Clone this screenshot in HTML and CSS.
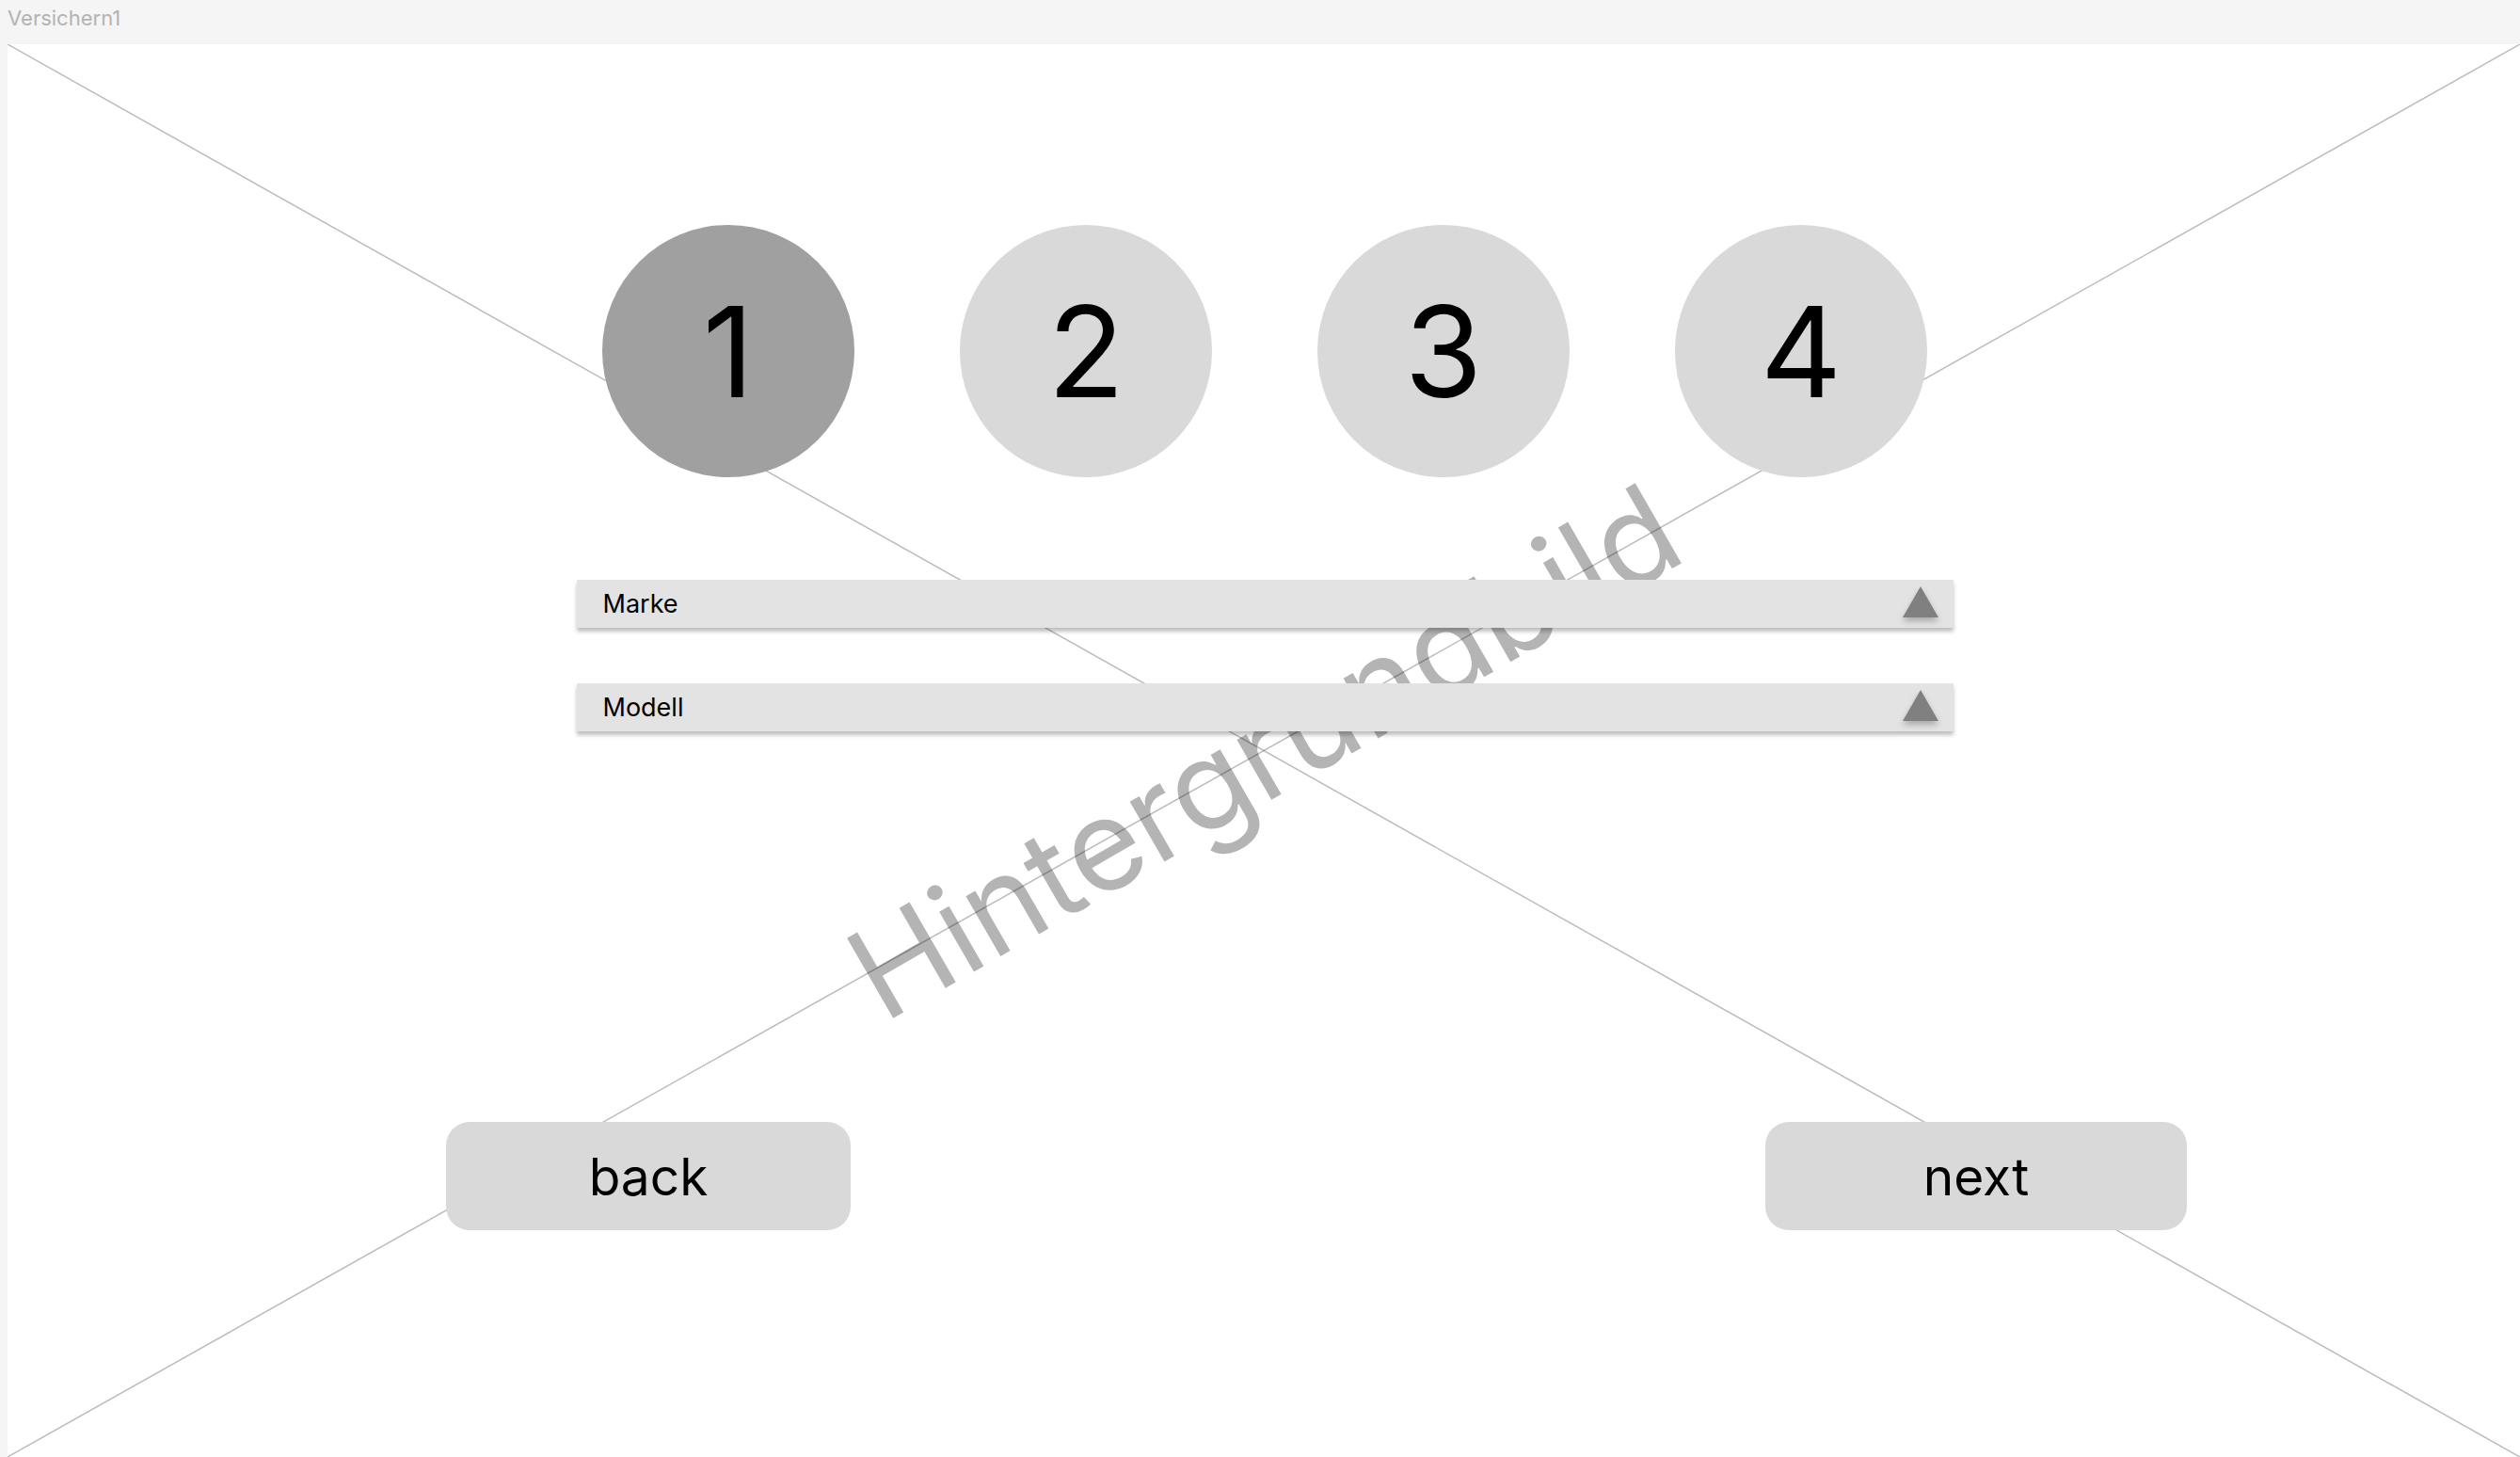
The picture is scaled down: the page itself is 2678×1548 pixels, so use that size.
FILE: index.html
```html
<!DOCTYPE html>
<html lang="de">
<head>
<meta charset="utf-8">
<title>Versichern1</title>
<link rel="stylesheet" href="styles.css">
</head>
<body>
<div class="canvas-title">Versichern1</div>
<div class="frame">
  <div class="watermark">Hintergrundbild</div>
  <svg class="cross" viewBox="0 0 100 100" preserveAspectRatio="none" aria-hidden="true">
    <line x1="0" y1="0" x2="100" y2="100" vector-effect="non-scaling-stroke"/>
    <line x1="100" y1="0" x2="0" y2="100" vector-effect="non-scaling-stroke"/>
  </svg>
  <div class="content">
    <div class="steps">
      <div class="step step-active">1</div>
      <div class="step">2</div>
      <div class="step">3</div>
      <div class="step">4</div>
    </div>
    <div class="fields">
      <div class="select">
        <span class="select-label">Marke</span>
        <svg class="select-arrow" viewBox="0 0 38 33" aria-hidden="true"><polygon points="19,0 38,33 0,33"/></svg>
      </div>
      <div class="select">
        <span class="select-label">Modell</span>
        <svg class="select-arrow" viewBox="0 0 38 33" aria-hidden="true"><polygon points="19,0 38,33 0,33"/></svg>
      </div>
    </div>
    <div class="nav">
      <div class="btn btn-back">back</div>
      <div class="btn btn-next">next</div>
    </div>
  </div>
</div>
</body>
</html>
```
FILE: styles.css
```css
html, body {
  margin: 0;
  padding: 0;
}
body {
  width: 2678px;
  height: 1548px;
  overflow: hidden;
  background: #f5f5f5;
  font-family: Inter, "Noto Sans", sans-serif;
}
.canvas-title {
  height: 47px;
  box-sizing: border-box;
  padding: 6px 0 0 8px;
  font-size: 22px;
  line-height: 26px;
  color: #b3b3b3;
}
.frame {
  position: relative;
  margin-left: 8px;
  width: 2670px;
  height: 1501px;
  background: #ffffff;
  overflow: hidden;
}
.watermark {
  position: absolute;
  left: 50%;
  top: 50%;
  transform: translate(-50%, -50%) rotate(-30deg);
  font-size: 135px;
  line-height: normal;
  color: #b4b4b4;
  white-space: nowrap;
  z-index: 0;
}
.cross {
  position: absolute;
  left: 0;
  top: 0;
  width: 100%;
  height: 100%;
  z-index: 1;
}
.cross line {
  stroke: rgba(0, 0, 0, 0.27);
  stroke-width: 1.5;
}
.content {
  position: relative;
  z-index: 2;
  display: flex;
  flex-direction: column;
  align-items: center;
  padding-top: 192px;
  padding-left: 2px;
}
.steps {
  display: flex;
  gap: 112px;
}
.step {
  width: 268px;
  height: 268px;
  border-radius: 50%;
  background: #d9d9d9;
  display: flex;
  align-items: center;
  justify-content: center;
  font-size: 134px;
  line-height: 1;
  color: #000;
}
.step-active {
  background: #a0a0a0;
}
.fields {
  margin-top: 109px;
  display: flex;
  flex-direction: column;
  gap: 59px;
}
.select {
  width: 1463px;
  height: 51px;
  box-sizing: border-box;
  padding: 0 16px 0 28px;
  background: #e3e3e3;
  box-shadow: 0 4px 4px rgba(0, 0, 0, 0.25);
  display: flex;
  align-items: center;
  justify-content: space-between;
}
.select-label {
  font-size: 27px;
  color: #000;
}
.select-arrow {
  width: 38px;
  height: 33px;
  align-self: flex-start;
  margin-top: 7px;
  fill: #808080;
  filter: drop-shadow(0 4px 3px rgba(0, 0, 0, 0.25));
}
.nav {
  align-self: stretch;
  margin-top: 415px;
  padding-left: 464px;
  display: flex;
  gap: 972px;
}
.btn {
  height: 115px;
  border-radius: 25px;
  background: #d9d9d9;
  display: flex;
  align-items: center;
  justify-content: center;
  font-size: 55px;
  color: #000;
}
.btn-back {
  width: 430px;
}
.btn-next {
  width: 448px;
}
```
